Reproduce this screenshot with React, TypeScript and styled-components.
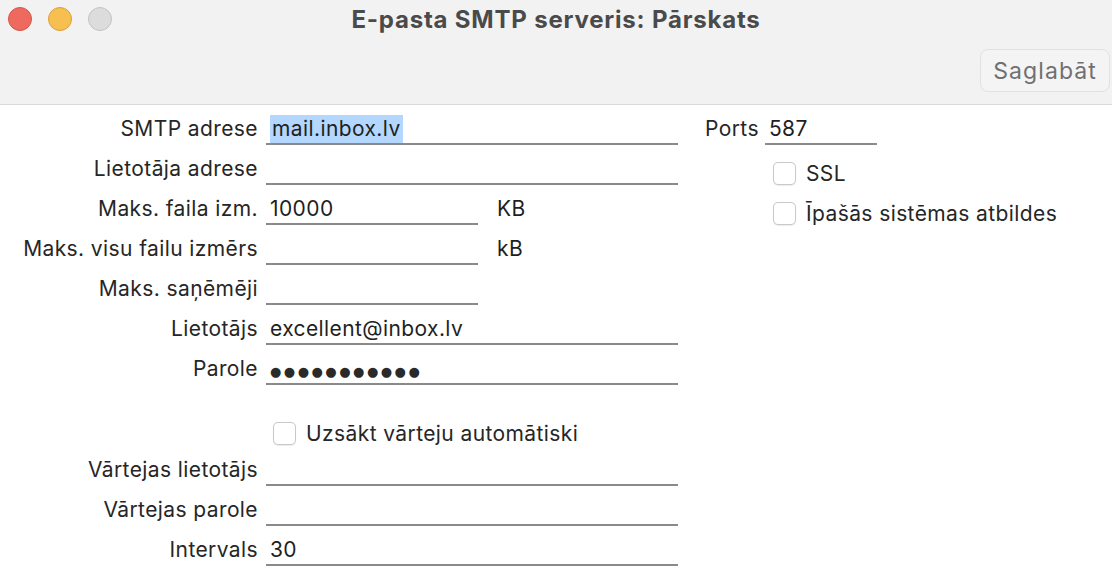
import styled, { createGlobalStyle } from "styled-components";

const GlobalStyle = createGlobalStyle`
  html, body {
    margin: 0;
    padding: 0;
    background: #ffffff;
  }

  body {
    font-family: Inter, "Noto Sans", "Liberation Sans", sans-serif;
    color: #232323;
  }
`;

interface FieldRowProps {
  label: string;
  value?: string;
  width?: number;
  unit?: string;
  highlight?: boolean;
  secret?: boolean;
}

const FieldRow = ({ label, value, width = 412, unit, highlight, secret }: FieldRowProps) => (
  <Row>
    <Label>{label}</Label>
    <Field $width={width}>
      {highlight && value ? (
        <Selected>{value}</Selected>
      ) : secret && value ? (
        <Dots>{value.replace(/./g, "●")}</Dots>
      ) : (
        value
      )}
    </Field>
    {unit && <Unit>{unit}</Unit>}
  </Row>
);

const CheckItem = ({ text }: { text: string }) => (
  <>
    <Box />
    <CheckLabel>{text}</CheckLabel>
  </>
);

const App = () => {
  return (
    <>
      <GlobalStyle />
      <Window>
        <TitleBar>
          <Lights>
            <Light $fill="#ee6a5e" $edge="#d4554a" />
            <Light $fill="#f6bf4f" $edge="#d8a13f" />
            <Light $fill="#dcdcdc" $edge="#c3c3c3" />
          </Lights>
          <Title>E-pasta SMTP serveris: Pārskats</Title>
          <span />
          <Toolbar>
            <SaveButton>Saglabāt</SaveButton>
          </Toolbar>
        </TitleBar>

        <Form>
          <LeftColumn>
            <FieldRow label="SMTP adrese" value="mail.inbox.lv" highlight />
            <FieldRow label="Lietotāja adrese" />
            <FieldRow label="Maks. faila izm." value="10000" width={212} unit="KB" />
            <FieldRow label="Maks. visu failu izmērs" width={212} unit="kB" />
            <FieldRow label="Maks. saņēmēji" width={212} />
            <FieldRow label="Lietotājs" value="excellent@inbox.lv" />
            <FieldRow label="Parole" value="passwordxyz" secret />

            <GatewayCheck>
              <CheckItem text="Uzsākt vārteju automātiski" />
            </GatewayCheck>

            <FieldRow label="Vārtejas lietotājs" />
            <FieldRow label="Vārtejas parole" />
            <FieldRow label="Intervals" value="30" />
          </LeftColumn>

          <RightColumn>
            <Row>
              <PortLabel>Ports</PortLabel>
              <PortField>587</PortField>
            </Row>
            <OptionRow>
              <CheckItem text="SSL" />
            </OptionRow>
            <OptionRow>
              <CheckItem text="Īpašās sistēmas atbildes" />
            </OptionRow>
          </RightColumn>
        </Form>
      </Window>
    </>
  );
};

export default App;

const Window = styled.div`
  width: 1112px;
  height: 574px;
  display: flex;
  flex-direction: column;
  overflow: hidden;
  background: #ffffff;
`;

const TitleBar = styled.header`
  box-sizing: border-box;
  height: 105px;
  display: grid;
  grid-template-columns: 1fr auto 1fr;
  grid-template-rows: 38px 1fr;
  background: #f2f2f2;
  border-bottom: 1px solid #d9d9d9;
`;

const Lights = styled.div`
  display: flex;
  align-items: center;
  gap: 16px;
  padding-left: 8px;
`;

const Light = styled.span<{ $fill: string; $edge: string }>`
  box-sizing: border-box;
  width: 24px;
  height: 24px;
  border-radius: 50%;
  background: ${(p) => p.$fill};
  border: 1px solid ${(p) => p.$edge};
`;

const Title = styled.h1`
  margin: 0;
  align-self: center;
  font-size: 24px;
  font-weight: 700;
  color: #4a4a4a;
  letter-spacing: 0.8px;
`;

const Toolbar = styled.div`
  grid-column: 1 / -1;
  display: flex;
  justify-content: flex-end;
  align-items: flex-start;
  padding: 11px 2px 0 0;
`;

const SaveButton = styled.button`
  box-sizing: border-box;
  height: 43px;
  padding: 0 12px;
  font-family: inherit;
  font-size: 23px;
  letter-spacing: 1.1px;
  color: #707070;
  background: #f4f4f4;
  border: 1px solid #e1e1e1;
  border-radius: 8px;
`;

const Form = styled.main`
  display: flex;
  font-size: 21px;
  letter-spacing: 0.4px;
`;

const LeftColumn = styled.section`
  width: 678px;
  display: flex;
  flex-direction: column;
`;

const RightColumn = styled.section`
  margin-left: 27px;
  display: flex;
  flex-direction: column;
`;

const Row = styled.div`
  height: 40px;
  display: flex;
  align-items: flex-end;
`;

const Label = styled.label`
  width: 258px;
  flex-shrink: 0;
  margin-bottom: 2px;
  text-align: right;
  line-height: 28px;
  white-space: nowrap;
  color: #262626;
`;

const Field = styled.div<{ $width: number }>`
  box-sizing: border-box;
  width: ${(p) => p.$width}px;
  height: 30px;
  margin-left: 8px;
  padding: 0 4px;
  line-height: 28px;
  color: #1f1f1f;
  border-bottom: 2px solid #8a8a8a;
  white-space: nowrap;
`;

const Selected = styled.span`
  display: inline-block;
  height: 28px;
  padding: 0 2px;
  background: #b3d7fe;
`;

const Dots = styled.span`
  font-family: "DejaVu Sans", sans-serif;
  font-size: 13px;
  letter-spacing: 2.5px;
  color: #2a2a2a;
`;

const Unit = styled.span`
  margin: 0 0 2px 19px;
  line-height: 28px;
  color: #1f1f1f;
`;

const PortLabel = styled.label`
  margin-bottom: 2px;
  line-height: 28px;
  color: #262626;
`;

const PortField = styled.div`
  box-sizing: border-box;
  width: 112px;
  height: 30px;
  margin-left: 6px;
  padding: 0 4px;
  line-height: 28px;
  color: #1f1f1f;
  border-bottom: 2px solid #8a8a8a;
`;

const OptionRow = styled.div`
  height: 40px;
  display: flex;
  align-items: flex-end;
  padding-left: 68px;
`;

const GatewayCheck = styled.div`
  height: 40px;
  margin-top: 20px;
  display: flex;
  align-items: flex-end;
  padding: 0 0 1px 273px;
`;

const Box = styled.span`
  box-sizing: border-box;
  width: 23px;
  height: 23px;
  flex-shrink: 0;
  border: 1px solid #c9c9c9;
  border-radius: 5px;
  background: #ffffff;
  box-shadow: 0 0.5px 1px rgba(0, 0, 0, 0.08);
`;

const CheckLabel = styled.span`
  margin-left: 10px;
  line-height: 23px;
  color: #262626;
`;
